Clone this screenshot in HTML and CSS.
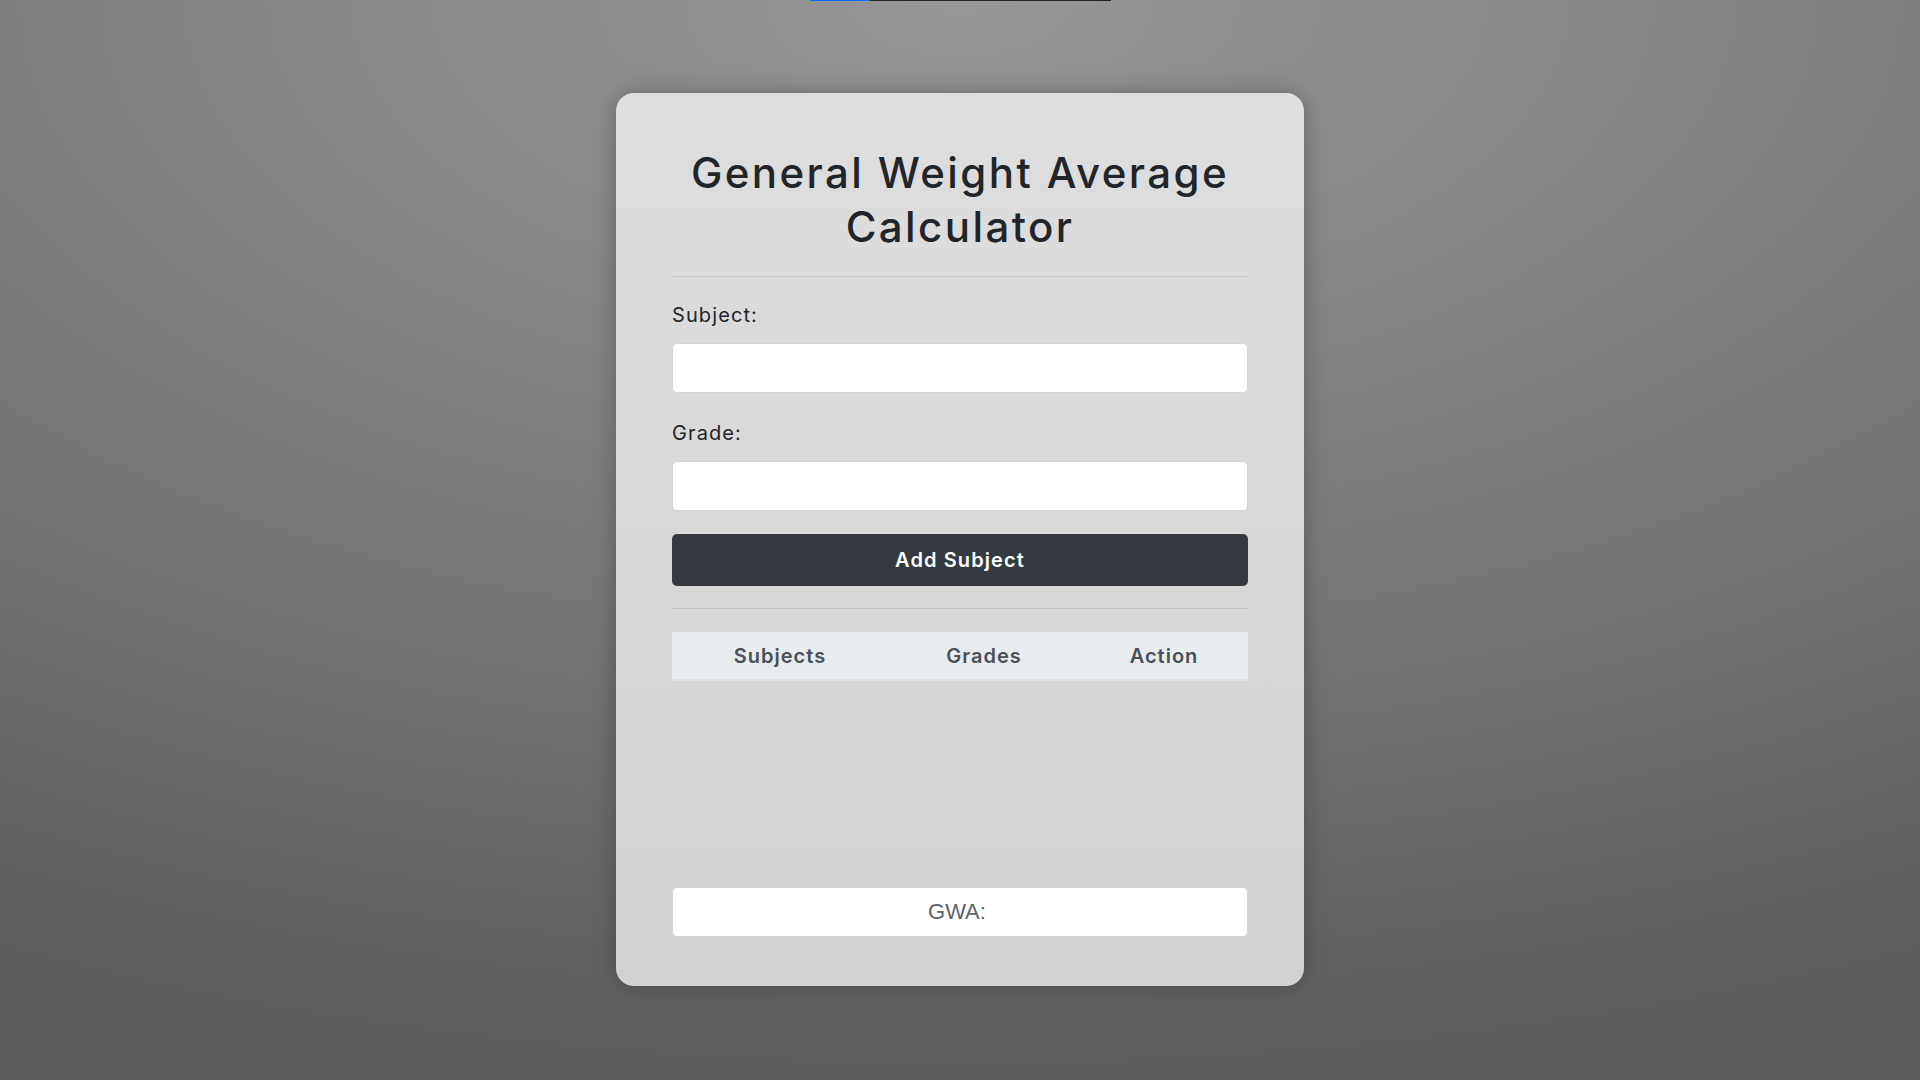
FILE: index.html
```html
<!DOCTYPE html>
<html lang="en">
  <head>
    <meta name="viewport" content="width=device-width" />
    <title>GWA Calculator</title>
    <link rel="stylesheet" href="styles.css">
  </head>
  <body>
    <div class="progress">
      <div class="progress-fill"></div>
    </div>
    <main class="calculator">
      <h1 class="title">General Weight Average Calculator</h1>
      <hr class="divider">
      <label class="field-label" for="subject">Subject:</label>
      <input class="field" id="subject" type="text">
      <label class="field-label" for="grade">Grade:</label>
      <input class="field" id="grade" type="text">
      <button class="add-btn" type="button">Add Subject</button>
      <hr class="divider">
      <div class="table-wrap">
        <table class="subjects">
          <thead>
            <tr>
              <th class="col-subject">Subjects</th>
              <th class="col-grade">Grades</th>
              <th class="col-action">Action</th>
            </tr>
          </thead>
          <tbody></tbody>
        </table>
      </div>
      <input class="gwa" type="text" value="GWA:" readonly>
    </main>
  </body>
</html>
```

FILE: styles.css
```css
* {
  box-sizing: border-box;
}

body {
  margin: 0;
  min-height: 100vh;
  display: flex;
  flex-direction: column;
  align-items: center;
  font-family: Inter, "Noto Sans", sans-serif;
  color: #212529;
  background: radial-gradient(ellipse 110% 100% at 50% 0%, #979797 0%, #7c7c7c 50%, #5c5c5c 100%);
}

/* thin bar peeking at the top edge */
.progress {
  width: 301px;
  height: 1px;
  background: #222;
}

.progress-fill {
  width: 60px;
  height: 100%;
  background: #0d6efd;
}

.calculator {
  width: 688px;
  margin-top: 92px;
  padding: 53px 56px 49px;
  display: flex;
  flex-direction: column;
  border-radius: 18px;
  background: linear-gradient(180deg, #dedede 0%, #d2d2d2 100%);
  box-shadow: 0 0 24px rgba(0, 0, 0, .28);
}

.title {
  margin: 0;
  font-size: 42px;
  font-weight: 500;
  line-height: 54px;
  text-align: center;
  letter-spacing: 2.4px;
}

.divider {
  width: 100%;
  margin: 22px 0 0;
  border: 0;
  border-top: 1px solid #c2c2c2;
}

.field-label {
  margin-top: 23px;
  font-size: 20px;
  line-height: 30px;
  letter-spacing: 1.1px;
}

.field-label + .field {
  margin-top: 13px;
}

.field + .field-label {
  margin-top: 25px;
}

.field {
  height: 50px;
  padding: 6px 12px;
  font: inherit;
  border: 1px solid #ced4da;
  border-radius: 5px;
  background: #fff;
}

.add-btn {
  height: 52px;
  margin-top: 23px;
  font: inherit;
  font-size: 20px;
  font-weight: 600;
  letter-spacing: 1.1px;
  color: #fff;
  border: 0;
  border-radius: 5px;
  background: #343a40;
}

.table-wrap {
  height: 232px;
  margin-top: 23px;
}

.subjects {
  width: 100%;
  border-collapse: collapse;
}

.subjects th {
  height: 48px;
  padding: 0;
  font-size: 20px;
  font-weight: 600;
  letter-spacing: 1px;
  color: #495057;
  background: #e9ecef;
  border-bottom: 2px solid #dee2e6;
}

.col-subject {
  width: 216px;
}

.col-grade {
  width: 192px;
}

.col-action {
  width: 168px;
}

.gwa {
  height: 50px;
  margin-top: 23px;
  padding: 0 6px 0 0;
  font-family: "Liberation Sans", Arial, sans-serif;
  font-size: 22px;
  text-align: center;
  color: #5d6368;
  border: 1px solid #ced4da;
  border-radius: 5px;
  background: #fff;
}
```
